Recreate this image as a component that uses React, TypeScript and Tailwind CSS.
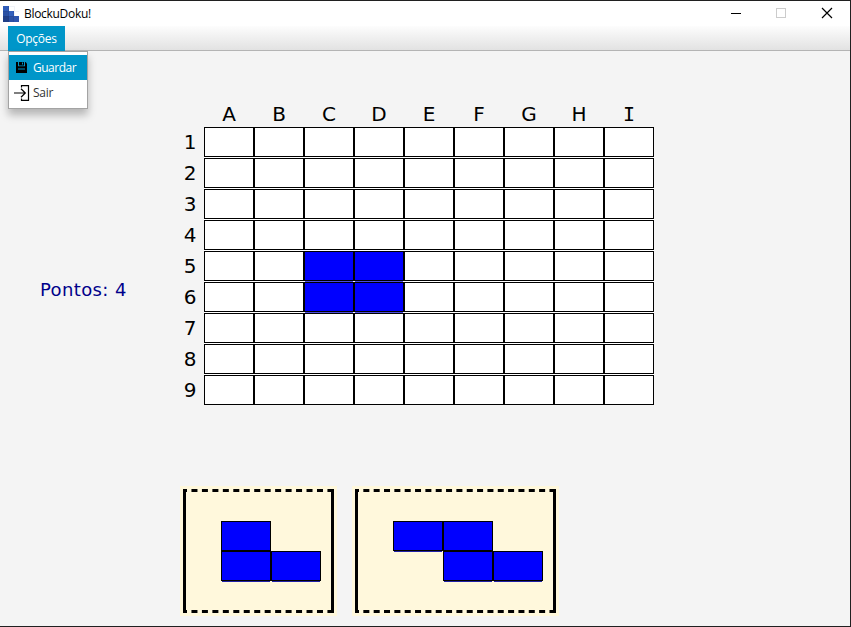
import React from "react";

const COLS = ["A", "B", "C", "D", "E", "F", "G", "H", "I"];
const ROWS = [1, 2, 3, 4, 5, 6, 7, 8, 9];
const FILLED = new Set(["C5", "D5", "C6", "D6"]);

function AppLogo() {
  return (
    <svg width="16" height="16" viewBox="0 0 16 16" shapeRendering="crispEdges">
      <rect x="0" y="0" width="6" height="5" fill="#2f5cb8" />
      <rect x="0" y="5" width="6" height="5" fill="#2a50a4" />
      <rect x="0" y="10" width="6" height="6" fill="#213f87" />
      <rect x="6" y="5" width="5" height="5" fill="#3260bd" />
      <rect x="6" y="10" width="5" height="6" fill="#2b51a5" />
      <rect x="11" y="10" width="5" height="6" fill="#2c55ae" />
      <path d="M0 5.5H6M0 10.5H11M5.5 0V16M10.5 5V16" stroke="#1c3778" strokeOpacity=".2" />
      <path d="M6 0.5H11M11.5 0V10M11 5.5H16" stroke="#f0f3f8" />
    </svg>
  );
}

function TitleBar() {
  return (
    <div className="flex h-[25px] items-center bg-white pl-[3px]">
      <AppLogo />
      <span className="ml-[5px] flex-1 text-[12px] leading-[16px] tracking-[-0.3px] text-black">BlockuDoku!</span>
      <svg width="120" height="25" shapeRendering="crispEdges">
        <path d="M1 12.5H11" stroke="#000" />
        <rect x="46.5" y="7.5" width="9" height="9" fill="none" stroke="#ccc" />
        <path d="M92 7L102 17M102 7L92 17" stroke="#000" shapeRendering="auto" strokeWidth="1.2" />
      </svg>
    </div>
  );
}

function OptionsMenu() {
  return (
    <div className="absolute left-0 top-[25px] h-[58px] w-[80px] border border-[#a3a3a3] bg-white pt-[3px] shadow-[0_6px_8px_rgba(0,0,0,0.26)]">
      <div className="flex h-[25px] items-center bg-[#0096c9] pl-[7px] text-white">
        <svg width="11" height="11" viewBox="0 0 11 11">
          <path d="M0 0H9.5L11 1.5V11H0Z" fill="#000" />
          <path d="M2 0H3V3.5H8V0H9V4.3H2ZM6 0.5H7V2.5H6ZM2 6.5H9V7.5H2Z" fill="#0096c9" />
        </svg>
        <span className="ml-[6px] tracking-[-0.5px]">Guardar</span>
      </div>
      <div className="flex h-[25px] items-center pl-[5px] text-[#333]">
        <svg width="16" height="16" viewBox="0 0 16 16" fill="none" stroke="#000" strokeWidth="1.2">
          <path d="M7.5 2.5V.6H14.5V15.4H7.5V13.5M0 8H11.5M7 3.8L11.3 8L7 12.2" />
        </svg>
        <span className="ml-[3px] tracking-[-0.3px]">Sair</span>
      </div>
    </div>
  );
}

function MenuBar() {
  return (
    <div className="flex h-[25px] border-b border-[#b4b4b4] bg-linear-to-b from-[#fdfdfd] to-[#e2e2e2] pl-[8px] text-[12px] leading-[16px]">
      <div className="relative z-10 flex h-[25px] w-[57px] items-center justify-center bg-[#0096c9] text-white">
        <span className="tracking-[-0.25px]">Opções</span>
        <OptionsMenu />
      </div>
    </div>
  );
}

function Board() {
  return (
    <div className="flex flex-col text-[20px] leading-[24px] text-black">
      <div className="flex h-[24px] pl-[28px]">
        {COLS.map((c) => (
          <div key={c} className={c === "I" ? "w-[50px] text-center font-['DejaVu_Sans_Mono',monospace] leading-[22px]" : "w-[50px] text-center leading-[22px]"}>
            {c}
          </div>
        ))}
      </div>
      {ROWS.map((r) => (
        <div key={r} className="flex h-[31px] last:h-[30px]">
          <div className="w-[28px] text-center leading-[30px]">{r}</div>
          {COLS.map((c) => {
            const on = FILLED.has(c + r);
            return (
              <div key={c} className="w-[50px] bg-white">
                <div className={on ? "h-[30px] border border-black bg-[#0000ff]" : "h-[30px] border border-black bg-white"} />
                {on && <div className="mx-px h-px bg-[#4c4cdd]" />}
              </div>
            );
          })}
        </div>
      ))}
    </div>
  );
}

function Piece({ rows }: { rows: number[][] }) {
  return (
    <div className="flex flex-col">
      {rows.map((row, i) => (
        <div key={i} className="flex h-[30px]">
          {row.map((v, j) => (
            <div key={j} className="w-[50px]">
              {v === 1 && (
                <>
                  <div className="h-[30px] border border-black bg-[#0000ff]" />
                  {!(rows[i + 1] && rows[i + 1][j]) && <div className="mx-px h-px bg-[#2020a8]" />}
                </>
              )}
            </div>
          ))}
        </div>
      ))}
    </div>
  );
}

function DashedEdge({ width, period }: { width: number; period: number }) {
  const gap = period - 6;
  return (
    <svg className="block" width={width} height="3">
      <line x1="0" x2={width} y1="1.5" y2="1.5" stroke="#000" strokeWidth="3" strokeDasharray={`6 ${gap}`} strokeDashoffset="2" />
    </svg>
  );
}

function PieceCard({ width, period, rows }: { width: number; period: number; rows: number[][] }) {
  return (
    <div className="h-[130px] bg-[#fff8dc] p-[3px]">
      <div className="flex h-[124px] flex-col justify-between">
        <DashedEdge width={width} period={period} />
        <div className="-my-[3px] h-[124px] border-x-[3px] border-black pl-[35px] pt-[32px]">
          <Piece rows={rows} />
        </div>
        <DashedEdge width={width} period={period} />
      </div>
    </div>
  );
}

export default function App() {
  return (
    <div className="flex h-[627px] w-[851px] flex-col overflow-hidden border-y border-r border-[#202020] bg-[#f4f4f4] font-['Open_Sans','Noto_Sans',sans-serif]">
      <TitleBar />
      <MenuBar />
      <main className="flex flex-1 flex-col pt-[52px] font-['DejaVu_Sans',sans-serif]">
        <div className="flex items-start">
          <div className="w-[176px] pl-[40px] pt-[175px] text-[18px] leading-[24px] tracking-[0.38px] whitespace-nowrap text-[#00008b]">Pontos: 4</div>
          <Board />
        </div>
        <div className="mt-[81px] flex gap-[15px] pl-[180px]">
          <div className="w-[157px]">
            <PieceCard width={151} period={10.46} rows={[[1, 0], [1, 1]]} />
          </div>
          <div className="w-[207px]">
            <PieceCard width={201} period={10.34} rows={[[1, 1, 0], [0, 1, 1]]} />
          </div>
        </div>
      </main>
    </div>
  );
}
